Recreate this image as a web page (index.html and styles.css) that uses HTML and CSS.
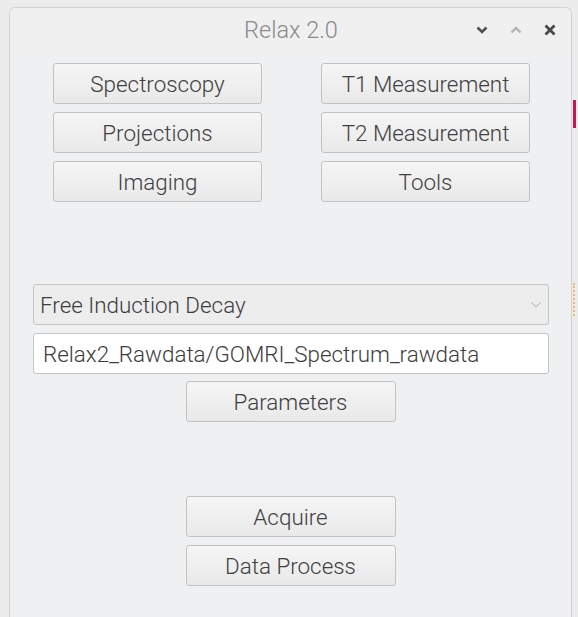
FILE: index.html
```html
<!DOCTYPE html>
<html>
<head>
<meta charset="utf-8">
<link rel="stylesheet" href="styles.css">
</head>
<body>
<div class="desk">
  <div class="window">
    <div class="titlebar">
      <span class="title">Relax 2.0</span>
      <div class="controls">
        <svg class="ctl" width="14" height="14" viewBox="0 0 14 14"><path d="M2.5 4.5 L7 9 L11.5 4.5" fill="none" stroke="#505050" stroke-width="2.6"/></svg>
        <svg class="ctl" width="14" height="14" viewBox="0 0 14 14"><path d="M2.5 9.5 L7 5 L11.5 9.5" fill="none" stroke="#b4b4b4" stroke-width="2.4"/></svg>
        <svg class="ctl" width="14" height="14" viewBox="0 0 14 14"><path d="M2.5 2.5 L11.5 11.5 M11.5 2.5 L2.5 11.5" fill="none" stroke="#484848" stroke-width="2.8"/></svg>
      </div>
    </div>
    <div class="content">
      <div class="grid">
        <button class="btn">Spectroscopy</button>
        <button class="btn">T1 Measurement</button>
        <button class="btn">Projections</button>
        <button class="btn">T2 Measurement</button>
        <button class="btn">Imaging</button>
        <button class="btn">Tools</button>
      </div>
      <div class="fields">
        <div class="combo">
          <span>Free Induction Decay</span>
          <svg width="12" height="8" viewBox="0 0 12 8"><path d="M1.5 1.5 L6 6 L10.5 1.5" fill="none" stroke="#c4c4c4" stroke-width="1.3"/></svg>
        </div>
        <div class="input">Relax2_Rawdata/GOMRI_Spectrum_rawdata</div>
        <button class="btn wide">Parameters</button>
      </div>
      <div class="actions">
        <button class="btn wide">Acquire</button>
        <button class="btn wide">Data Process</button>
      </div>
    </div>
  </div>
  <div class="behind">
    <div class="red"></div>
    <div class="dash"></div>
  </div>
</div>
</body>
</html>
```
FILE: styles.css
```css
html, body {
  margin: 0;
  padding: 0;
  background: #ececec;
  font-family: Roboto, "Liberation Sans", sans-serif;
}
.desk {
  display: flex;
  height: 617px;
  overflow: hidden;
}
.window {
  margin-left: 9px;
  margin-top: 7px;
  width: 561px;
  height: 620px;
  border: 1px solid #d2d2d2;
  border-bottom: none;
  border-radius: 6px 6px 0 0;
  background: #eff0f1;
  flex: none;
}
.titlebar {
  position: relative;
  height: 43px;
  display: flex;
  align-items: center;
  justify-content: center;
  background: #f0f0f0;
  border-radius: 6px 6px 0 0;
}
.title {
  font-size: 23.5px;
  font-weight: 300;
  color: #8a8a8a;
  margin-left: 1px;
  margin-top: 1px;
}
.controls {
  position: absolute;
  right: 14px;
  top: 15px;
  display: flex;
  gap: 20px;
}
.ctl { display: block; }
.content {
  padding-top: 12px;
}
.grid {
  display: grid;
  grid-template-columns: 209px 209px;
  justify-content: space-between;
  row-gap: 8px;
  padding: 0 41px 0 43px;
}
.btn {
  height: 41px;
  border: 1px solid #c2c2c2;
  border-radius: 3px;
  background: linear-gradient(#f5f5f5, #e9e9e9);
  font-family: Roboto, "Liberation Sans", sans-serif;
  font-size: 22.4px;
  font-weight: 300;
  color: #404040;
  padding: 0;
  margin: 0;
  box-sizing: border-box;
}
.fields {
  margin-top: 82px;
  display: flex;
  flex-direction: column;
  align-items: center;
  gap: 8px;
}
.combo, .input {
  width: 516px;
  height: 41px;
  box-sizing: border-box;
  border: 1px solid #c4c4c4;
  border-radius: 3px;
  font-size: 22.4px;
  font-weight: 300;
  color: #3c3c3c;
  display: flex;
  align-items: center;
  margin-left: 1px;
}
.combo {
  background: #ededee;
  padding: 0 6px 0 6px;
  justify-content: space-between;
}
.input {
  background: #ffffff;
  padding: 0 8px 0 9px;
}
.fields .btn.wide { margin-top: -1px; }
.wide {
  width: 210px;
}
.actions {
  margin-top: 74px;
  display: flex;
  flex-direction: column;
  align-items: center;
  gap: 8px;
}
.behind {
  flex: 1;
  display: flex;
  flex-direction: column;
  padding-left: 1px;
}
.red {
  margin-top: 100px;
  height: 28px;
  width: 3px;
  background: #c8174a;
}
.dash {
  margin-top: 155px;
  height: 33px;
  width: 2px;
  border-left: 2px dotted #e8c060;
}
```
